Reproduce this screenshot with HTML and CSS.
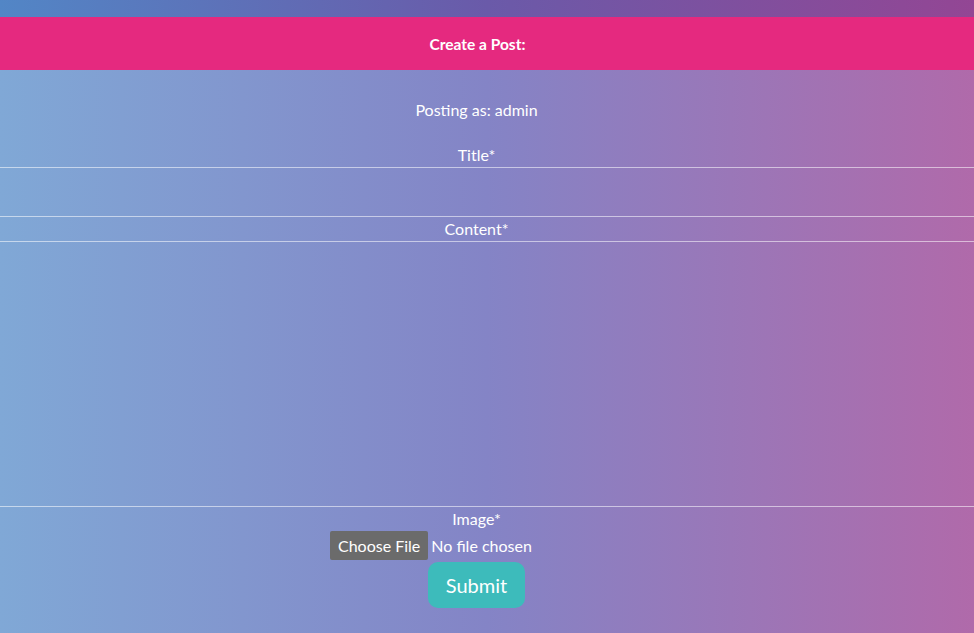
FILE: index.html
```html
<!DOCTYPE html>
<html lang="en">
<head>
<meta charset="utf-8">
<title>Create a Post</title>
<link rel="stylesheet" href="styles.css">
</head>
<body>
<div class="topbar"></div>
<header class="page-header">
  <h1 class="page-title">Create a Post:</h1>
</header>
<main class="content">
  <form class="post-form">
    <p class="posting-as">Posting as: admin</p>
    <label class="field-label" for="title">Title*</label>
    <input class="field-input" id="title" type="text">
    <label class="field-label" for="content">Content*</label>
    <textarea class="field-textarea" id="content"></textarea>
    <label class="field-label" for="image">Image*</label>
    <div class="file-row">
      <input class="file-input" id="image" type="file">
    </div>
    <div class="submit-row">
      <button class="submit-btn" type="button">Submit</button>
    </div>
  </form>
</main>
</body>
</html>
```

FILE: styles.css
```css
html, body {
  margin: 0;
  padding: 0;
}

body {
  min-height: 633px;
  font-family: "Lato", "Liberation Sans", sans-serif;
  color: #ffffff;
  display: flex;
  flex-direction: column;
}

.topbar {
  height: 17px;
  background: linear-gradient(to right, #5286c6 0%, #6a5aa9 50%, #934694 100%);
}

.page-header {
  height: 53px;
  background: #e5297f;
  display: flex;
  align-items: center;
  justify-content: center;
  padding-right: 19px;
}

.page-title {
  margin: 0;
  padding-top: 1px;
  font-family: "Lato", "Liberation Sans", sans-serif;
  font-size: 15.5px;
  font-weight: bold;
  color: #ffffff;
}

.content {
  flex: 1;
  background: linear-gradient(to right, #80a8d6 0%, #8484c6 50%, #b06aaa 100%);
}

.post-form {
  display: flex;
  flex-direction: column;
  align-items: stretch;
  text-align: center;
  padding-top: 28px;
}

.posting-as {
  margin: 0 0 21px;
  padding-right: 21px;
  font-size: 16px;
  line-height: 24px;
}

.field-label {
  display: block;
  padding-right: 21px;
  font-size: 16px;
  line-height: 24px;
}

.field-input,
.field-textarea {
  display: block;
  box-sizing: border-box;
  width: 100%;
  margin: 0;
  background: transparent;
  border: none;
  border-top: 1px solid rgba(255, 255, 255, 0.55);
  border-bottom: 1px solid rgba(255, 255, 255, 0.55);
  color: #ffffff;
  font-family: inherit;
  font-size: 16px;
  outline: none;
  resize: none;
}

.field-input {
  height: 50px;
}

.field-textarea {
  height: 266px;
}

.file-row {
  display: flex;
  justify-content: center;
  height: 29px;
  align-items: center;
}

.file-input {
  width: 314px;
  font-family: inherit;
  font-size: 16px;
  color: #ffffff;
  text-align: left;
}

.file-input::file-selector-button {
  background: #6b6b6b;
  color: #ffffff;
  border: none;
  border-radius: 2px;
  font-family: inherit;
  font-size: 16px;
  height: 29px;
  padding: 0 8px;
  margin-right: 3px;
}

.submit-row {
  display: flex;
  justify-content: center;
  padding-top: 2px;
  padding-right: 21px;
  padding-bottom: 25px;
}

.submit-btn {
  width: 97px;
  height: 46px;
  background: #3dbbbb;
  color: #ffffff;
  border: none;
  border-radius: 10px;
  font-family: inherit;
  font-size: 20px;
}
```
